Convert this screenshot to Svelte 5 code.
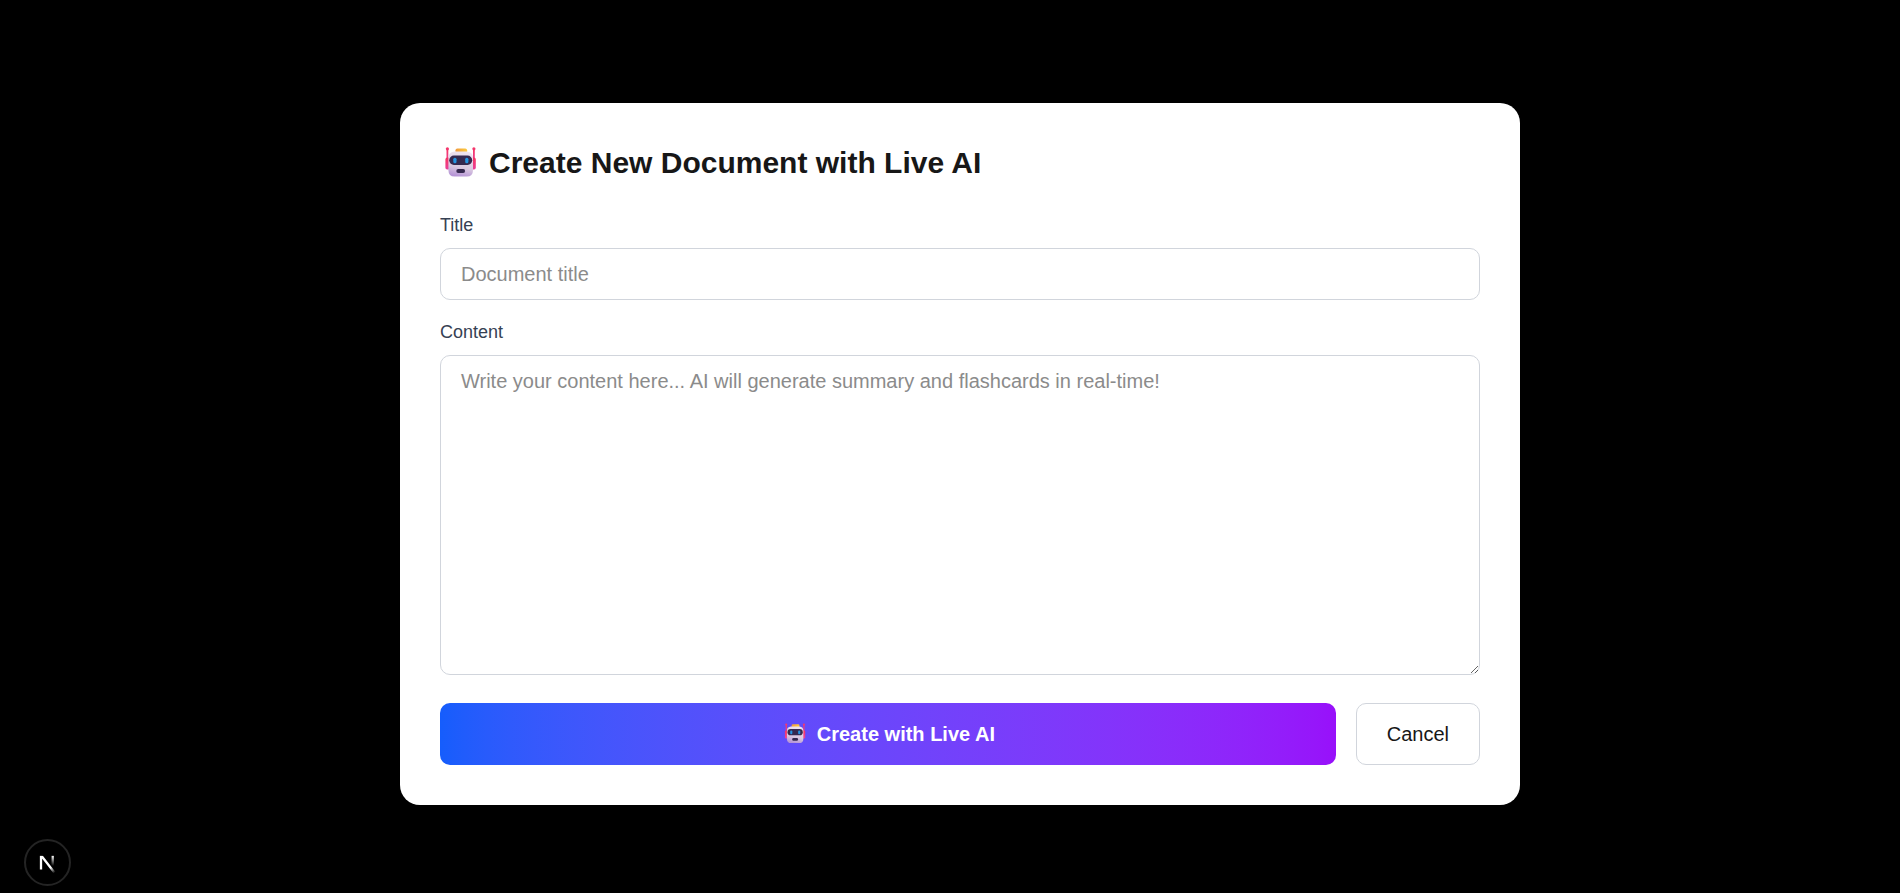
<script>
  let title = $state('');
  let content = $state('');
</script>

{#snippet robot(id)}
  <svg class="robot" viewBox="0 2 41 36" aria-hidden="true">
    <defs>
      <linearGradient id="{id}-face" x1="0.7" y1="0" x2="0.5" y2="1">
        <stop offset="0" stop-color="#f1e6f2" />
        <stop offset="0.65" stop-color="#d9c8e0" />
        <stop offset="1" stop-color="#b695d6" />
      </linearGradient>
      <linearGradient id="{id}-cap" x1="0" y1="0" x2="1" y2="0">
        <stop offset="0" stop-color="#f09a3e" />
        <stop offset="1" stop-color="#fccb3c" />
      </linearGradient>
      <linearGradient id="{id}-ear" x1="0" y1="0" x2="0" y2="1">
        <stop offset="0" stop-color="#f8355f" />
        <stop offset="1" stop-color="#e8409c" />
      </linearGradient>
    </defs>
    <g fill="url(#{id}-ear)">
      <circle cx="7.4" cy="5.8" r="1.6" />
      <rect x="6.5" y="5.4" width="1.8" height="13" />
      <rect x="5.4" y="14.6" width="4.6" height="12" rx="1.8" />
      <circle cx="33.9" cy="5.8" r="1.6" />
      <rect x="33" y="5.4" width="1.8" height="13" />
      <rect x="31.2" y="14.6" width="4.6" height="12" rx="1.8" />
    </g>
    <rect x="15.5" y="5.4" width="11.6" height="6" rx="1.8" fill="url(#{id}-cap)" />
    <path d="M14.4 8.6H27.2Q33 9.2 33 15V27Q33 33.6 26.8 33.6H14.6Q8.4 33.6 8.4 27V15Q8.4 9.2 14.4 8.6Z" fill="url(#{id}-face)" />
    <rect x="9.2" y="12.6" width="23" height="9.4" rx="4.7" fill="#35294f" />
    <rect x="13.3" y="14.8" width="3.2" height="5.4" rx="1.5" fill="#2494e0" />
    <rect x="25.2" y="14.8" width="3.2" height="5.4" rx="1.5" fill="#2494e0" />
    <rect x="16.3" y="26" width="8.8" height="4" rx="1.9" fill="#35294f" />
  </svg>
{/snippet}

<main>
  <form class="card" onsubmit={(e) => e.preventDefault()}>
    <h1>{@render robot('heading')}<span>Create New Document with Live AI</span></h1>
    <div class="field">
      <label for="title">Title</label>
      <input id="title" type="text" placeholder="Document title" bind:value={title} />
    </div>
    <div class="field">
      <label for="content">Content</label>
      <textarea
        id="content"
        placeholder="Write your content here... AI will generate summary and flashcards in real-time!"
        bind:value={content}
      ></textarea>
    </div>
    <div class="actions">
      <button class="primary" type="submit">{@render robot('submit')}<span>Create with Live AI</span></button>
      <button class="cancel" type="button">Cancel</button>
    </div>
  </form>
</main>

<button class="dev-badge" type="button" aria-label="Open Next.js Dev Tools">
  <svg viewBox="0 0 16 17" fill="none" aria-hidden="true">
    <defs>
      <linearGradient id="n-diagonal" gradientUnits="userSpaceOnUse" x1="9.96" y1="11.12" x2="15.48" y2="17.97">
        <stop stop-color="#fff" />
        <stop offset="0.604" stop-color="#fff" stop-opacity="0" />
      </linearGradient>
      <linearGradient id="n-stem" gradientUnits="userSpaceOnUse" x1="11.82" y1="1.4" x2="11.79" y2="9.63">
        <stop stop-color="#fff" />
        <stop offset="1" stop-color="#fff" stop-opacity="0" />
      </linearGradient>
      <mask id="n-cut" maskUnits="userSpaceOnUse" x="0" y="0" width="16" height="17">
        <rect width="16" height="17" fill="#fff" />
        <rect width="5" height="1.5" fill="#000" />
      </mask>
    </defs>
    <path d="M13.3 15.2 L2.34 1 V12.6" stroke="url(#n-diagonal)" stroke-width="1.86" mask="url(#n-cut)" />
    <path d="M11.825 1.5 V13.1" stroke="url(#n-stem)" stroke-width="1.86" />
  </svg>
</button>

<style>
  :global(body) {
    margin: 0;
    background: #000;
    font-family: "Liberation Sans", Arial, Helvetica, sans-serif;
    font-size: 20px;
    line-height: 30px;
    color: #171717;
  }

  main {
    padding: 103px 40px 88px 60px;
  }

  .card {
    box-sizing: border-box;
    max-width: 1120px;
    margin: 0 auto;
    padding: 40px;
    border-radius: 20px;
    background: #fff;
  }

  h1 {
    display: flex;
    align-items: center;
    gap: 8px;
    margin: 0 0 30px;
    font-size: 30px;
    line-height: 40px;
    font-weight: 700;
  }

  .robot {
    flex: none;
    width: 41px;
    height: 36px;
  }

  .field {
    display: flex;
    flex-direction: column;
    gap: 10px;
    margin-bottom: 20px;
  }

  label {
    font-size: 18px;
    line-height: 25px;
    font-weight: 500;
    color: #364153;
  }

  input,
  textarea {
    box-sizing: border-box;
    width: 100%;
    margin: 0;
    padding: 10px 20px;
    border: 1px solid #d1d5dc;
    border-radius: 10px;
    background: transparent;
    font: inherit;
    color: inherit;
  }

  input {
    height: 52px;
  }

  textarea {
    height: 320px;
    resize: vertical;
  }

  input::placeholder,
  textarea::placeholder {
    color: #8b8b8b;
    opacity: 1;
  }

  .actions {
    display: flex;
    gap: 20px;
    margin-top: 28px;
  }

  button {
    font: inherit;
    cursor: pointer;
  }

  .primary {
    flex: 1;
    display: flex;
    align-items: center;
    justify-content: center;
    gap: 8px;
    padding: 16px 30px;
    border: 0;
    border-radius: 10px;
    background: linear-gradient(to right in oklab, #155dfc, #9810fa);
    color: #fff;
    font-weight: 700;
  }

  .primary .robot {
    width: 28px;
    height: 24px;
  }

  .cancel {
    padding: 15px 30px;
    border: 1px solid #d1d5dc;
    border-radius: 10px;
    background: transparent;
    color: inherit;
  }

  .dev-badge {
    position: fixed;
    left: 24px;
    bottom: 7px;
    box-sizing: border-box;
    display: flex;
    align-items: center;
    justify-content: center;
    width: 47px;
    height: 47px;
    padding: 3px 0 0 1px;
    border: 2px solid #242424;
    border-radius: 50%;
    background: #000;
  }

  .dev-badge svg {
    width: 20px;
    height: 21px;
  }
</style>
